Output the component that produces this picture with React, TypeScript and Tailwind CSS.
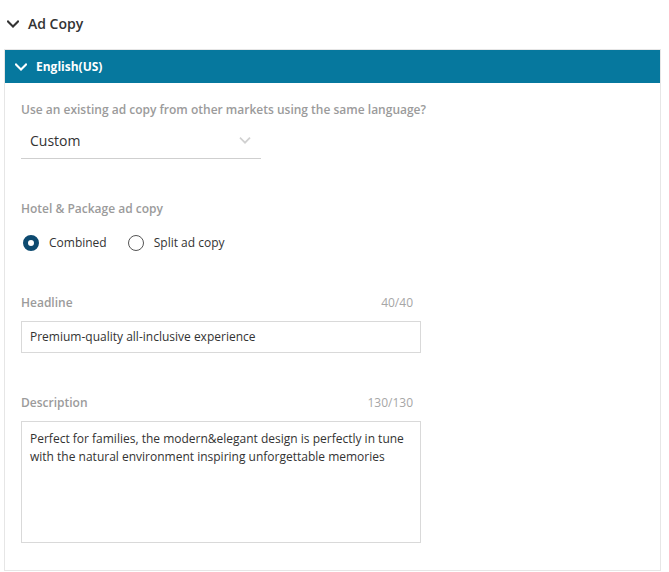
import React from 'react';

const font = { fontFamily: '"Open Sans", "Liberation Sans", sans-serif' };

const Chevron = ({ className }: { className?: string }) => (
  <svg viewBox="0 0 12 8" className={className} fill="none" stroke="currentColor">
    <path d="M1 1.5l5 5 5-5" strokeWidth="2" strokeLinecap="square" />
  </svg>
);

const Radio = ({ checked, label }: { checked: boolean; label: string }) => (
  <label className="flex items-center gap-[10px]">
    {checked ? (
      <span className="w-4 h-4 rounded-full border-[5px] border-[#0d4a70] bg-white box-border" />
    ) : (
      <span className="w-4 h-4 rounded-full border-[1.5px] border-[#555] bg-white box-border" />
    )}
    <span className="text-[12px] text-[#333]">{label}</span>
  </label>
);

const App = () => {
  return (
    <div className="w-[669px] h-[572px] bg-white overflow-hidden" style={font}>
      {/* Section title */}
      <div className="flex items-center h-[49px] pl-[7px] gap-[9px] pb-[2px]">
        <Chevron className="w-3 h-2 text-[#333]" />
        <span className="text-[14px] font-semibold text-[#333]">Ad Copy</span>
      </div>

      {/* Market panel */}
      <div className="ml-[4px] w-[657px] h-[522px] border border-[#e6e6e6]">
        <div className="flex items-center h-[33px] bg-[#06789e] pl-[10px] gap-[9px]">
          <Chevron className="w-3 h-2 text-white" />
          <span className="text-[12px] font-bold text-white">English(US)</span>
        </div>

        <div className="pl-[16px] pt-[18px]">
          <div className="text-[12px] font-semibold text-[#9b9b9b] leading-[18px]">
            Use an existing ad copy from other markets using the same language?
          </div>
          <div className="mt-[4px] w-[240px] h-[36px] border-b border-[#cfcfcf] flex items-center justify-between pl-[9px] pr-[10px]">
            <span className="text-[14px] text-[#333]">Custom</span>
            <Chevron className="w-3 h-[7px] text-[#d0d0d0]" />
          </div>

          <div className="mt-[41px] text-[12px] font-semibold text-[#9b9b9b] leading-[18px]">
            Hotel &amp; Package ad copy
          </div>
          <div className="mt-[15px] h-5 flex items-center gap-[21px] pl-[2px]">
            <Radio checked label="Combined" />
            <Radio checked={false} label="Split ad copy" />
          </div>

          <div className="mt-[41px] w-[400px]">
            <div className="flex justify-between items-center h-[18px] text-[12px] leading-[18px] pr-[8px]">
              <span className="font-semibold text-[#9b9b9b]">Headline</span>
              <span className="text-[#a6a6a6]">40/40</span>
            </div>
            <div className="mt-[9px] h-[32px] border border-[#d9d9d9] flex items-center px-[8px] text-[12px] text-[#333]">
              Premium-quality all-inclusive experience
            </div>
          </div>

          <div className="mt-[41px] w-[400px]">
            <div className="flex justify-between items-center h-[18px] text-[12px] leading-[18px] pr-[8px]">
              <span className="font-semibold text-[#9b9b9b]">Description</span>
              <span className="text-[#a6a6a6]">130/130</span>
            </div>
            <div className="mt-[9px] h-[122px] border border-[#d9d9d9] px-[8px] pt-[8px] text-[12px] leading-[18px] text-[#333]">
              Perfect for families, the modern&amp;elegant design is perfectly in tune with the natural environment inspiring unforgettable memories
            </div>
          </div>
        </div>
      </div>
    </div>
  );
};

export default App;
